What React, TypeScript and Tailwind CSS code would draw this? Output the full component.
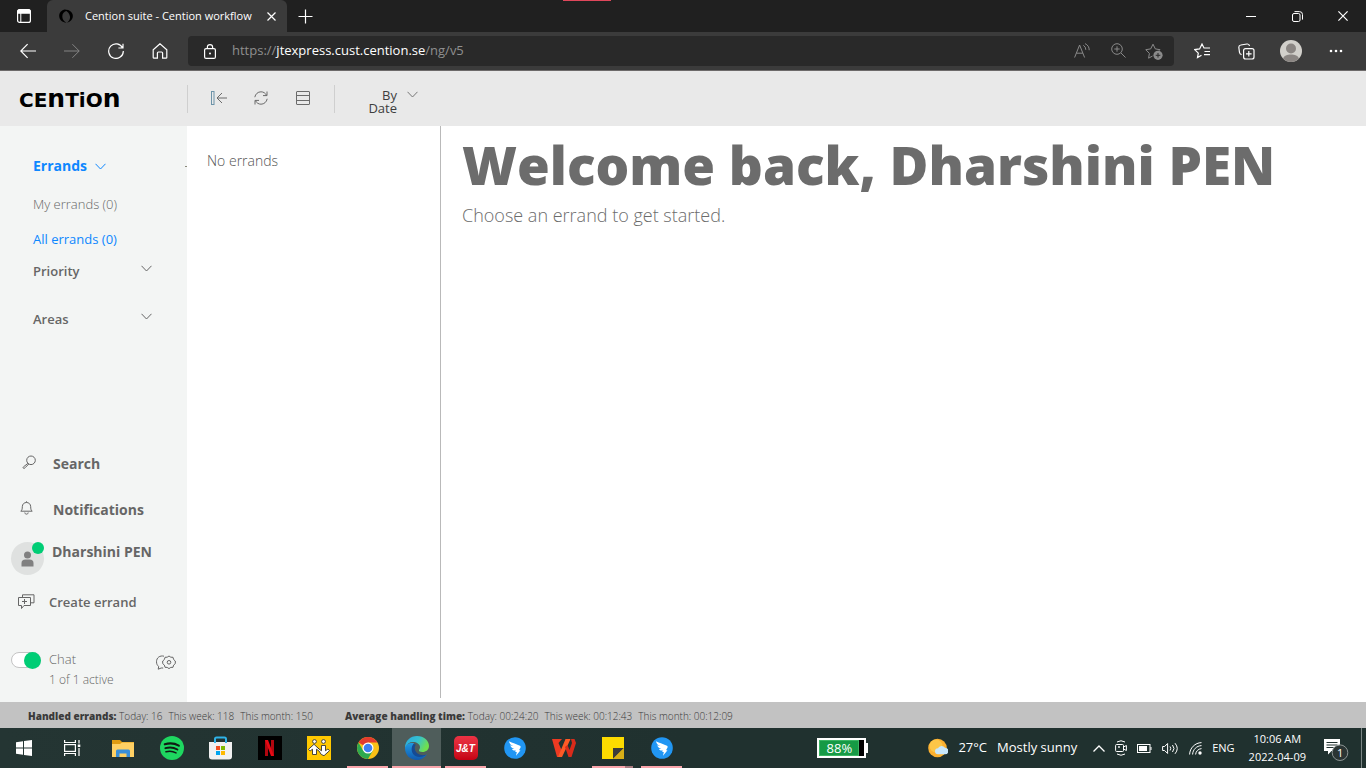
import { ReactNode, SVGProps } from 'react';
import { clsx } from 'clsx';

interface IconProps extends SVGProps<SVGSVGElement> {
  w: number;
  h: number;
  children: ReactNode;
}

const Icon = ({ w, h, children, className, ...rest }: IconProps) => (
  <svg
    width={w}
    height={h}
    viewBox={`0 0 ${w} ${h}`}
    fill="none"
    stroke="currentColor"
    aria-hidden="true"
    className={clsx('shrink-0', className)}
    {...rest}>
    {children}
  </svg>
);

const ChevronDown = ({ className }: { className?: string }) => (
  <Icon w={11} h={7} className={className}>
    <path d="M.5.8 5.5 6 10.5.8" />
  </Icon>
);

const TabBar = () => (
  <div className="relative flex h-8 items-stretch bg-[#202020] text-white">
    <div className="absolute left-[563px] top-0 h-px w-12 bg-[#e0475b]" />
    <button aria-label="Tab actions" className="flex w-[47px] items-center justify-center">
      <Icon w={14} h={14}>
        <rect x=".6" y=".6" width="12.8" height="12.8" rx="2" strokeWidth="1.2" />
        <path d="M.6 2.6a2 2 0 0 1 2-2h8.8a2 2 0 0 1 2 2v1.6H.6z" fill="currentColor" />
        <path d="M3.8 4v9.4" />
      </Icon>
    </button>
    <div className="flex w-60 items-center rounded-t-md bg-[#3b3b3b] pl-3">
      <Icon w={14} h={14} stroke="none">
        <path d="M6 .5C2.500 1 0 3.700.2 7.300.4 10.800 3.200 13.600 7.500 13.700 4.700 12.200 3.200 10 3.300 7.200 3.400 4.400 5 2.600 8 1.800z" fill="#000" />
        <path d="M5 1C8.500-.2 12.300 1.600 13.500 5c1.300 4-1.300 8-5.500 8.700 2.200-1.500 3.300-3.700 3-6.200C10.700 4.500 8.500 2.200 5 1z" fill="#000" />
      </Icon>
      <span className="ml-3 grow whitespace-nowrap text-[11px]">Cention suite - Cention workflow</span>
      <button aria-label="Close tab" className="flex w-8 items-center justify-center">
        <Icon w={9} h={9} strokeWidth="1.2">
          <path d="m.5.5 8 8m0-8-8 8" />
        </Icon>
      </button>
    </div>
    <button aria-label="New tab" className="flex w-9 items-center justify-center">
      <Icon w={15} h={15}>
        <path d="M7.5.5v14M.5 7.5h14" strokeWidth="1.2" />
      </Icon>
    </button>
    <div className="ml-auto flex">
      <button aria-label="Minimize" className="flex w-[46px] items-center justify-center">
        <Icon w={10} h={10}>
          <path d="M0 5.5h10" />
        </Icon>
      </button>
      <button aria-label="Restore" className="flex w-[46px] items-center justify-center">
        <Icon w={11} h={11}>
          <rect x=".5" y="2.5" width="7.5" height="8" rx="1.5" />
          <path d="M2.5.6h5a3 3 0 0 1 3 3v5" />
        </Icon>
      </button>
      <button aria-label="Close" className="flex w-[46px] items-center justify-center">
        <Icon w={10} h={10} strokeWidth="1.2">
          <path d="m.4.4 9.2 9.2m0-9.2L.4 9.6" />
        </Icon>
      </button>
    </div>
  </div>
);

const NavBar = () => (
  <div className="flex h-[39px] items-center border-b border-[#6d6a6a] bg-[#3b3b3b] text-white">
    <div className="flex w-[188px] shrink-0 pl-1.5">
      <button aria-label="Back" className="flex w-11 justify-center">
        <Icon w={16} h={16} strokeWidth="1.2">
          <path d="M16 8H.8M7.6 1.2.8 8l6.8 6.8" />
        </Icon>
      </button>
      <button aria-label="Forward" className="flex w-11 justify-center text-[#848484]">
        <Icon w={16} h={16}>
          <path d="M0 8h15.2M8.4 1.2 15.2 8l-6.8 6.8" />
        </Icon>
      </button>
      <button aria-label="Refresh" className="flex w-11 justify-center">
        <Icon w={16} h={16} strokeWidth="1.2">
          <path d="M14.6 5A7.3 7.3 0 1 0 15.3 8M15 .8V5h-4.6" />
        </Icon>
      </button>
      <button aria-label="Home" className="flex w-11 justify-center">
        <Icon w={16} h={16} strokeWidth="1.2">
          <path d="M8 .8 1.2 6.8v7.6q0 .8.8.8h3.4V10q0-1 1-1h3.2q1 0 1 1v5.2H14q.8 0 .8-.8V6.8z" />
        </Icon>
      </button>
    </div>
    <div className="flex h-[30px] grow items-center rounded bg-[#292929] pl-4 pr-0.5">
      <Icon w={12} h={15} strokeWidth="1.2">
        <rect x=".6" y="4.6" width="10.8" height="9.8" rx="1.5" />
        <path d="M3.4 4.6V3a2.6 2.4 0 0 1 5.2 0v1.6" />
        <circle cx="6" cy="9.5" r="1" fill="currentColor" stroke="none" />
      </Icon>
      <div role="textbox" aria-label="Address" className="ml-4 text-[13px] text-[#8f8f8f]">
        https://<span className="text-white">jtexpress.cust.cention.se</span>/ng/v5
      </div>
      <div className="ml-auto flex text-[#8a8a8a]">
        <button aria-label="Read aloud" className="flex w-9 justify-center">
          <Icon w={16} h={16}>
            <path d="M.6 14.5 5.6 2l5 12.5M2.4 10.2h6.4M9.3 2.3a5 5 0 0 1 2.5 4.5M11 .6c2.8 1.3 4.3 3.6 4.2 6.6" />
          </Icon>
        </button>
        <button aria-label="Zoom" className="flex w-9 justify-center">
          <Icon w={15} h={15}>
            <circle cx="6" cy="6" r="5.3" />
            <path d="m10 10 4.5 4.5M6 3.3v5.4M3.3 6h5.4" />
          </Icon>
        </button>
        <button aria-label="Add to favorites" className="flex w-9 justify-center">
          <Icon w={18} h={17}>
            <path d="M7.5 13 3.6 15.2l.8-4.8L.8 6.7l4.9-.8L8 1.2l2.3 4.7 4.7.8-1 1" />
            <circle cx="13" cy="12.3" r="4.6" fill="currentColor" stroke="none" />
            <path d="M13 10v4.6M10.7 12.3h4.6" stroke="#292929" />
          </Icon>
        </button>
      </div>
    </div>
    <div className="ml-1.5 mr-2 flex shrink-0 items-center">
      <button aria-label="Favorites" className="flex w-11 justify-center">
        <Icon w={17} h={16} strokeWidth="1.2">
          <path d="m7.5 12.2-4 2.4.8-4.5L.8 6.6l4.800-.7L8 1l2 4h6M10.500 8.500H16M10 11.700h6" />
        </Icon>
      </button>
      <button aria-label="Collections" className="flex w-11 justify-center">
        <Icon w={17} h={17} strokeWidth="1.2">
          <rect x="5.600" y="5.600" width="10.400" height="10.400" rx="2" />
          <path d="M10.800 8v5.600M8 10.800h5.600M3.600 11.600A2.500 2.500 0 0 1 1.500 9.500L.8 4.300A2.300 2.300 0 0 1 2.800 2L9 1a2.300 2.300 0 0 1 2.500 2" />
        </Icon>
      </button>
      <button aria-label="Profile" className="flex w-[46px] justify-center">
        <Icon w={22} h={22} stroke="none">
          <circle cx="11" cy="11" r="11" fill="#d2d0cb" />
          <circle cx="11" cy="8.500" r="5" fill="#8b8683" />
          <path d="M3 18.500c1.500-5.500 14.500-5.500 16 0a11 11 0 0 1-16 0z" fill="#8b8683" />
        </Icon>
      </button>
      <button aria-label="Settings and more" className="flex w-11 justify-center">
        <Icon w={14} h={4} fill="currentColor" stroke="none">
          <circle cx="2" cy="2" r="1.300" />
          <circle cx="7" cy="2" r="1.300" />
          <circle cx="12" cy="2" r="1.300" />
        </Icon>
      </button>
    </div>
  </div>
);

// unicase wordmark: the n's are lowercase at cap height
const Wordmark = () => (
  <div className="w-[187px] shrink-0 whitespace-nowrap pl-[19px] font-['DejaVu_Sans'] text-[20px] font-bold leading-8 text-black">
    CE<span className="text-[25px]">n</span>TiO<span className="text-[25px]">n</span>
  </div>
);

const AppHeader = () => (
  <header className="flex h-[55px] bg-[#e9e9e9] pt-3">
    <Wordmark />
    <div className="mt-0.5 flex h-7 items-center border-x border-[#cfcfcf] pb-0.5 pl-2.5 pr-2.5 text-[#6b6b6b]">
      <button aria-label="Collapse menu" className="flex w-[42px] justify-center">
        <Icon w={16} h={14}>
          <rect x=".5" y=".5" width="2.5" height="13" stroke="#6c93a8" />
          <path d="M16 7H6.500M11 2 6 7l5 5" />
        </Icon>
      </button>
      <button aria-label="Reload errands" className="flex w-[42px] justify-center">
        <Icon w={14} h={14}>
          <path d="M.8 6.200C1.400 3 3.900.8 7 .8c2.400 0 4.400 1.300 5.500 3.400M13 .5V4.600H9M13.200 7.800C12.600 11 10.100 13.200 7 13.200c-2.400 0-4.400-1.300-5.500-3.400M1 13.500V9.400h4" />
        </Icon>
      </button>
      <button aria-label="List view" className="flex w-[42px] justify-center">
        <Icon w={14} h={14}>
          <rect x=".5" y=".5" width="13" height="13" rx=".5" />
          <path d="M.5 4.500h13M.5 9.500h13" />
        </Icon>
      </button>
    </div>
    <button aria-haspopup="listbox" className="ml-[30px] flex items-start gap-2.5 self-start pt-1.5 text-[#3e3e3e]">
      <span className="w-8 text-right text-[13px] leading-[13px]">By Date</span>
      <ChevronDown className="mt-0.5 text-[#777]" />
    </button>
  </header>
);

const Sidebar = () => (
  <aside className="flex w-[187px] shrink-0 flex-col bg-[#f3f5f4] text-[13px] text-[#666]">
    <nav className="flex flex-col items-start pl-[33px] pt-[30px]">
      <div className="flex w-full items-center justify-between">
        <button className="flex h-5 items-center gap-2 text-sm font-bold text-[#0d87ff]">
          Errands <ChevronDown />
        </button>
        <span className="h-px w-0.5 bg-[#8a8a7a]" />
      </div>
      <a href="#my" className="mt-[18px] h-5 font-light leading-5">
        My errands (0)
      </a>
      <a href="#all" className="mt-[15px] h-5 font-medium leading-5 text-[#0d87ff]">
        All errands (0)
      </a>
      {['Priority', 'Areas'].map((label) => (
        <button
          key={label}
          className="mb-4 mt-3 flex h-5 w-[119px] items-center justify-between font-semibold leading-5">
          {label}
          <ChevronDown className="mb-1.5" />
        </button>
      ))}
    </nav>
    <div className="mt-auto flex flex-col px-[11px]">
      <button className="flex h-5 items-center pl-[11px] text-sm font-bold">
        <Icon w={15} h={14} className="mb-1">
          <circle cx="9" cy="5.300" r="4.300" />
          <path d="m6 8.300-4.500 3.500q-.9 1 0 1.500.8.400 1.500-.5L6.800 9" />
        </Icon>
        <span className="ml-4">Search</span>
      </button>
      <button className="mt-[26px] flex h-5 items-center pl-[9px] text-sm font-bold">
        <Icon w={13} h={14} className="mb-1">
          <path d="M6.500.3v1.200M.8 10.200h11.400c-1.500-1.400-1.400-2.300-1.500-4.500-.1-2.700-1.900-4.200-4.200-4.200S2.400 3 2.300 5.700c-.1 2.200 0 3.100-1.500 4.500zM4.800 11.500c0 2.200 3.400 2.200 3.400 0" />
        </Icon>
        <span className="ml-5">Notifications</span>
      </button>
      <button className="mt-[22px] flex items-start gap-2 text-sm font-bold">
        <span className="relative flex size-[33px] items-center justify-center rounded-full bg-[#dfe1e0]">
          <Icon w={13} h={16} fill="#808080" stroke="none">
            <circle cx="6.500" cy="4" r="3.500" />
            <path d="M.5 15.500V12q0-3.500 4-3.500h4q4 0 4 3.500v3.500z" />
          </Icon>
          <span className="absolute right-0 top-0 size-3 rounded-full bg-[#00cd75]" />
        </span>
        <span className="leading-5">Dharshini PEN</span>
      </button>
      <button className="mt-[18px] flex h-5 items-center pl-[7px] font-semibold">
        <Icon w={17} h={16} className="mb-0.5">
          <path d="M.5 3.500h12v8H6L3.500 14.500v-3h-3zM6.500 5v5M4 7.500h5M4.500 3V.8H16v8h-3" />
        </Icon>
        <span className="ml-3.5">Create errand</span>
      </button>
      <div className="mb-3 mt-9 flex items-start font-light">
        <input
          id="chat"
          type="checkbox"
          defaultChecked
          className="mt-[3px] h-4 w-[30px] shrink-0 appearance-none rounded-full border border-[#c4c4c4] bg-white before:-mt-px before:ml-3 before:block before:size-[17px] before:rounded-full before:bg-[#00cd75]"
        />
        <label htmlFor="chat" className="ml-2 flex flex-col">
          <span className="leading-[21px]">Chat</span>
          <span className="text-xs leading-5">1 of 1 active</span>
        </label>
        <button aria-label="Chat settings" className="ml-auto mt-1.5">
          <Icon w={20} h={15}>
            <path d="M8 1.200C4 .2.500 2.500.5 6.800c0 2 .8 3.700 2.200 4.700l-.5 2.700 3-1.200h2" />
            <path d="m13 1 1.800 1.200 2.200.1.600 2.200L19.300 6v2.600l-1.700 1.500-.6 2.200-2.200.1L13 13.600l-1.800-1.200-2.200-.1-.6-2.200L6.700 8.600V6l1.700-1.500.6-2.200 2.200-.1z" />
            <circle cx="13" cy="7.300" r="1.800" />
          </Icon>
        </button>
      </div>
    </div>
  </aside>
);

const stats = [
  { title: 'Handled errands:', values: ['Today: 16', 'This week: 118', 'This month: 150'] },
  { title: 'Average handling time:', values: ['Today: 00:24:20', 'This week: 00:12:43', 'This month: 00:12:09'] },
];

const StatsBar = () => (
  <footer className="flex h-[26px] items-center gap-8 bg-[#c2c2c2] pl-7 pt-0.5 text-[10px] text-[#3a3a3a]">
    {stats.map(({ title, values }) => (
      <div key={title} className="flex gap-1.5">
        <span>
          <strong className="font-extrabold">{title}</strong> <span className="font-light">{values[0]}</span>
        </span>
        {values.slice(1).map((value) => (
          <span key={value} className="font-light">
            {value}
          </span>
        ))}
      </div>
    ))}
  </footer>
);

const DingTalk = () => (
  <Icon w={22} h={22} stroke="none">
    <circle cx="11" cy="11" r="10.800" fill="#2196f3" />
    <path d="M5 4.200c3.200 1.900 8 2.900 11 4.600 1 .6.700 1.600 0 2.800l-1 1.600h1.500L12 18.700l.8-3.700h-1.600l.6-1.500c-2 .3-3.200-.4-3.800-1.500 1 .1 1.700.1 2.300-.1C7.600 11.200 6.600 9.700 6.300 8.300c1 .5 2 .7 3 .7C6.800 8 5.300 6.500 5 4.200z" fill="#fff" />
  </Icon>
);

const Windows = () => (
  <Icon w={16} h={16} fill="#fff" stroke="none">
    <path d="M0 2.300 7 1.300v6.200H0zM8 1.100 16 0v7.500H8zM0 8.500h7v6.200l-7-1zM8 8.500h8V16l-8-1.100z" />
  </Icon>
);

const TaskView = () => (
  <Icon w={17} h={16} stroke="#fff" strokeWidth="1.2">
    <path d="M.6 0v2.500h10.800V0M.6 16v-2.500h10.800V16M15 0v3.500M15 8v8" />
    <rect x=".6" y="4.600" width="10.800" height="6.800" />
    <rect x="13.800" y="4.500" width="2.500" height="2.500" fill="#fff" stroke="none" />
  </Icon>
);

const Explorer = () => (
  <Icon w={22} h={19} stroke="none">
    <path d="M0 1h8l2 2h12v4H0z" fill="#e09c12" />
    <path d="M0 5h8l2-1.500h12V18H0z" fill="#ffd164" />
    <path d="M4 18v-6q0-1.500 1.500-1.500h11q1.500 0 1.500 1.500v6h-3.500v-3.500h-7V18z" fill="#3a8fd8" />
  </Icon>
);

const Spotify = () => (
  <Icon w={24} h={24} stroke="#101a14" strokeLinecap="round">
    <circle cx="12" cy="12" r="12" fill="#1ed760" stroke="none" />
    <path d="M4.800 8.300c4.500-1.300 10-.9 14 1.300" strokeWidth="2.2" />
    <path d="M5.400 12.200c4-1.200 8.500-.7 12 1.300" strokeWidth="1.9" />
    <path d="M6 15.800c3.300-1 7-.6 10 1.100" strokeWidth="1.6" />
  </Icon>
);

const Store = () => (
  <Icon w={23} h={24} stroke="none">
    <path d="M0 6h23v14.500q0 3-3 3H3q-3 0-3-3z" fill="#f1f1f1" />
    <path d="M6 7V3q0-1.500 1.500-1.500h8Q17 1.500 17 3v4" fill="none" stroke="#2fb3e8" strokeWidth="2" />
    <path d="M7 10h4v4H7z" fill="#f25022" />
    <path d="M12 10h4v4h-4z" fill="#7fba00" />
    <path d="M7 15h4v4H7z" fill="#00a4ef" />
    <path d="M12 15h4v4h-4z" fill="#ffb900" />
  </Icon>
);

const Netflix = () => (
  <span className="flex size-6 items-center justify-center bg-black">
    <Icon w={9} h={16} stroke="none">
      <path d="M0 0h3v16H0zM6 0h3v16H6z" fill="#b1060f" />
      <path d="M0 0h3l6 16H6z" fill="#e50914" />
    </Icon>
  </span>
);

const Transfer = () => (
  <Icon w={24} h={24} stroke="none">
    <path d="M0 0h24v24H0z" fill="#ffc800" />
    <g fill="#fff" stroke="#333" strokeWidth=".9">
      <circle cx="7.500" cy="5.500" r="1.900" />
      <circle cx="16.500" cy="5.500" r="1.900" />
      <path d="M7 8.300 1.500 13.300l1.600 1.700 2.400-1.800v5.300h4v-5.300l2.500 1.800 2.300 3.500 2.700 1.200 5.500-5-1.600-1.700-2.400 1.800V9.500h-4v5.300L12 13z" />
      <path d="m12 13-1.500-1.500" />
    </g>
  </Icon>
);

const Chrome = () => (
  <Icon w={22} h={22} stroke="none">
    <circle cx="11" cy="11" r="11" fill="#fbc116" />
    <path d="M11 11 1.500 5.500A11 11 0 0 1 20.500 5.500H11z" fill="#e33b2e" />
    <path d="M1.500 5.500A11 11 0 0 0 11 22l4.800-8.300L11 11 6.200 13.700z" fill="#2da94f" />
    <circle cx="11" cy="11" r="5.500" fill="#fff" />
    <circle cx="11" cy="11" r="4.300" fill="#3f7ff0" />
  </Icon>
);

const Edge = () => (
  <Icon w={24} h={24} stroke="none">
    <defs>
      <linearGradient id="edge-top" x1="0" y1="0" x2="1" y2=".4">
        <stop offset="0" stopColor="#2aa9e0" />
        <stop offset=".55" stopColor="#35c1d0" />
        <stop offset="1" stopColor="#6fe04e" />
      </linearGradient>
      <linearGradient id="edge-side" x1="0" y1="0" x2="0" y2="1">
        <stop offset="0" stopColor="#1f9be4" />
        <stop offset="1" stopColor="#1158ad" />
      </linearGradient>
    </defs>
    <path d="M0 12C0 8 5 6.500 9 7c-1.500 2-2 5-.5 8 2.500 4.500 8 5.500 13.500 3.500C19.500 22 16 24 12 24 5 24 0 19 0 12z" fill="url(#edge-side)" />
    <path d="M0 11.500C.3 4.500 5.500 0 12 0c7 0 12 4.800 12 10 0 3.800-3 6-6.500 6-2.500 0-4-1-3.500-2 .7-1 1-1.700 1-2.700C15 8 11.500 6 8 6c-3.500 0-6.500 2-8 5.500z" fill="url(#edge-top)" />
    <path d="M8.700 8C6 10.500 6 15.500 8.500 18.500S16 22 21.500 18.800c-4 .9-7.500.4-10-2.300-2-2.300-2.500-5.500-.8-8z" fill="#164a93" />
  </Icon>
);

const JtExpress = () => (
  <span className="flex size-6 items-center justify-center rounded-[5px] bg-gradient-to-b from-[#ec3244] to-[#c50012] font-['Liberation_Sans'] text-[10px] font-bold italic text-white">
    J&amp;T
  </span>
);

const Wps = () => (
  <Icon w={24} h={18} stroke="none">
    <path d="M0 0h10l-3.500 4L9.500 11 7 18H5z" fill="#ee3a22" />
    <path d="M10 18h-4L13.500 0h5l-1.800 4z" fill="#ff5a26" />
    <path d="m13 8 3.500 10h3L24 4l-1.500-4H19l1 4-2.500 7-2-5z" fill="#d92b1a" />
  </Icon>
);

const StickyNotes = () => (
  <Icon w={22} h={22} stroke="none">
    <path d="M0 0h22v22H0z" fill="#fddb00" />
    <path d="M11 11h11L11 22z" fill="#3b3b3b" />
    <path d="M22 11v11H11z" fill="#d8ae17" />
  </Icon>
);

// underline: short for running apps, full for the focused one, split for grouped windows
const taskbarApps: { name: string; icon: ReactNode; state?: 'running' | 'focused' | 'grouped' }[] = [
  { name: 'File Explorer', icon: <Explorer /> },
  { name: 'Spotify', icon: <Spotify /> },
  { name: 'Microsoft Store', icon: <Store /> },
  { name: 'Netflix', icon: <Netflix /> },
  { name: 'Transfer', icon: <Transfer /> },
  { name: 'Chrome', icon: <Chrome />, state: 'running' },
  { name: 'Edge', icon: <Edge />, state: 'focused' },
  { name: 'J&T', icon: <JtExpress />, state: 'running' },
  { name: 'DingTalk', icon: <DingTalk /> },
  { name: 'WPS Office', icon: <Wps /> },
  { name: 'Sticky Notes', icon: <StickyNotes />, state: 'grouped' },
  { name: 'DingTalk chat', icon: <DingTalk />, state: 'running' },
];

const Taskbar = () => (
  <div className="flex h-10 items-stretch bg-gradient-to-r from-[#243533] via-[#20312f] to-[#20312f] text-white">
    <div className="mr-0.5 flex">
      <button aria-label="Start" className="flex w-12 items-center justify-center">
        <Windows />
      </button>
      <button aria-label="Task view" className="flex w-12 items-center justify-center">
        <TaskView />
      </button>
    </div>
    {taskbarApps.map(({ name, icon, state }) => (
      <button
        key={name}
        aria-label={name}
        className={clsx(
          'relative flex w-[49px] items-center justify-center',
          state === 'focused' && 'bg-[#4f5d5b]'
        )}>
        {icon}
        {state && (
          <span
            className={clsx(
              'absolute bottom-0 flex h-0.5 justify-end bg-[#f9a5ab]',
              state === 'focused' ? 'inset-x-0' : 'inset-x-1'
            )}>
            {state === 'grouped' && <span className="w-2 bg-[#a87b80]" />}
          </span>
        )}
      </button>
    ))}
    <div className="ml-auto flex items-center">
      <div className="flex items-center">
        <div className="flex h-5 w-[49px] border-2 border-white bg-black">
          <div className="w-10 border border-[#3bb563] bg-[#169a45] text-center text-[13px] leading-[15px]">88%</div>
        </div>
        <div className="h-2.5 w-0.5 bg-white" />
      </div>
      <button className="ml-[60px] flex items-center gap-2.5 text-[13px]">
        <Icon w={20} h={20} stroke="none">
          <circle cx="9.500" cy="10" r="9.300" fill="#fcb02f" />
          <circle cx="8" cy="8" r="6.500" fill="#fdc648" />
          <path d="M10 16.300a3 3 0 0 1 0-6 4 4 0 0 1 7-.6 3.200 3.200 0 0 1 0 6.600z" fill="#c9e7fb" />
        </Icon>
        <span>27°C</span>
        <span>Mostly sunny</span>
      </button>
      <div className="ml-4 flex items-center gap-2.5">
        <Icon w={12} h={7} strokeWidth="1.3">
          <path d="M.5 6.500 6 1l5.500 5.500" />
        </Icon>
        <Icon w={12} h={16}>
          <path d="M2 2q4-2.500 8 0M2 14q4 2.500 8 0" />
          <rect x=".6" y="4.500" width="7.900" height="7" rx="1" />
          <path d="m8.500 7 2.900-1.500v5L8.500 9" />
          <circle cx="4" cy="7" r=".6" />
        </Icon>
        <Icon w={15} h={9}>
          <rect x=".5" y=".5" width="12.500" height="8" />
          <path d="M2 2h8v5H2zM13.500 3h1v3h-1z" fill="currentColor" stroke="none" />
        </Icon>
        <Icon w={17} h={13}>
          <path d="M.6 4.500v4h2l3 3V1.500l-3 3zM8 4.500q1.500 2 0 4M10.500 3q3 3.500 0 7M13 1.200q4.500 5.300 0 10.600" />
        </Icon>
        <Icon w={13} h={13}>
          <path d="M.6 12.500C.8 6 6 .8 12.500.6M3.600 12.500c.2-4.900 4-8.700 8.900-8.900M6.600 12.500c.2-3.200 2.700-5.700 5.900-5.900" />
          <circle cx="11" cy="11" r="1.700" fill="currentColor" stroke="none" />
        </Icon>
        <span className="text-[11px]">ENG</span>
      </div>
      <div className="ml-3.5 text-center text-[11px] leading-[18px]">
        <div>10:06 AM</div>
        <div>2022-04-09</div>
      </div>
      <button aria-label="Notifications" className="relative ml-[18px] mr-3">
        <Icon w={25} h={26}>
          <path d="M0 4h16v12H7.500L4 19.500V16H0z" fill="currentColor" stroke="none" />
          <path d="M2.500 7.500h11M2.500 10h11M2.500 12.500h7" stroke="#20312f" />
          <circle cx="16" cy="17.700" r="7.800" fill="#2b3534" stroke="#8c9493" />
        </Icon>
        <span className="absolute bottom-0 left-[13px] text-[11px]">1</span>
      </button>
      <div className="mr-1 h-10 w-px bg-[#7b8685]" />
    </div>
  </div>
);

export default function App() {
  return (
    <div className="flex min-h-screen flex-col bg-white font-['Open_Sans',sans-serif]">
      <TabBar />
      <NavBar />
      <AppHeader />
      <div className="flex grow">
        <Sidebar />
        <section className="mb-1 w-[254px] shrink-0 border-r border-[#b9b9b9] px-5 pt-[25px] text-sm font-light text-[#555]">
          No errands
        </section>
        <main className="grow pl-[21px] pt-1.5 text-[#6c6c6c]">
          <h1 className="text-[53px] font-extrabold leading-[66px]">Welcome back, Dharshini PEN</h1>
          <p className="text-lg font-light leading-[34px]">Choose an errand to get started.</p>
        </main>
      </div>
      <StatsBar />
      <Taskbar />
    </div>
  );
}
